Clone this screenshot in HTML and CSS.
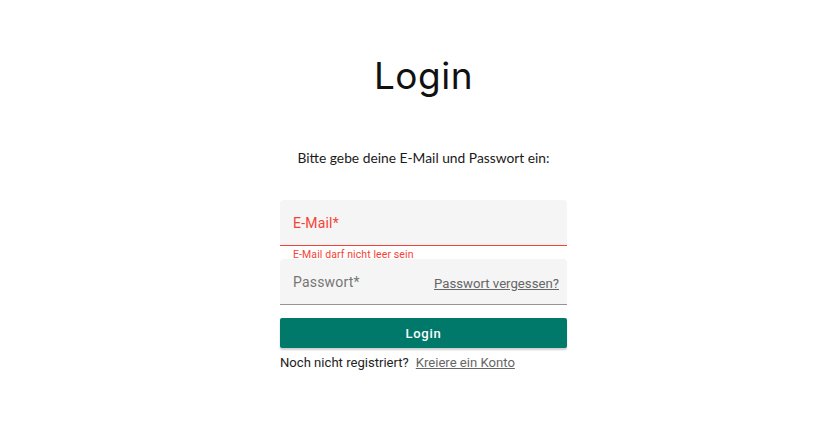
FILE: index.html
```html
<!DOCTYPE html>
<html lang="de">
<head>
<meta charset="utf-8">
<link rel="stylesheet" href="styles.css">
<title>Login</title>
</head>
<body>
<main class="page">
  <h1 class="title">Login</h1>
  <p class="intro">Bitte gebe deine E-Mail und Passwort ein:</p>
  <form class="form">
    <div class="field field-error">
      <span class="label">E-Mail*</span>
    </div>
    <div class="hint">E-Mail darf nicht leer sein</div>
    <div class="field">
      <span class="label">Passwort*</span>
      <a class="forgot" href="#">Passwort vergessen?</a>
    </div>
    <button class="btn" type="button">Login</button>
    <div class="register">
      <span>Noch nicht registriert?</span>
      <a href="#" class="reg-link">Kreiere ein Konto</a>
    </div>
  </form>
</main>
</body>
</html>
```

FILE: styles.css
```css
html, body {
  margin: 0;
  padding: 0;
  background: #fff;
}
body {
  font-family: Roboto, "Liberation Sans", sans-serif;
  color: #1a1a1a;
}
.page {
  display: flex;
  flex-direction: column;
  align-items: center;
  padding-left: 13px;
  padding-top: 52px;
}
.title {
  margin: 0;
  font-family: Inter, Lato, sans-serif;
  font-weight: 400;
  font-size: 37px;
  line-height: 48px;
  letter-spacing: 0.5px;
  color: #111;
}
.intro {
  margin: 48px 0 0;
  font-family: Lato, Inter, sans-serif;
  font-size: 13.8px;
  line-height: 20px;
  color: #1a1a1a;
}
.form {
  width: 287px;
  margin-top: 32px;
  display: flex;
  flex-direction: column;
}
.field {
  height: 45px;
  background: #f5f5f5;
  border-radius: 4px 4px 0 0;
  border-bottom: 1px solid #949494;
  display: flex;
  align-items: center;
  justify-content: space-between;
  padding: 0 8px 0 13px;
  box-sizing: content-box;
}
.field-error {
  border-bottom-color: #f44336;
}
.label {
  font-size: 14px;
  color: #757575;
  letter-spacing: 0.2px;
  margin-top: 1px;
}
.field-error .label {
  color: #f44336;
}
.hint {
  height: 11px;
  padding: 2px 0 0 13px;
  font-size: 10.5px;
  line-height: 13px;
  color: #f44336;
  letter-spacing: 0.1px;
}
.forgot {
  font-size: 13.2px;
  color: #666;
  text-decoration: underline;
  margin-top: 4px;
}
.btn {
  margin-top: 13px;
  height: 30px;
  border: 0;
  border-radius: 2px;
  background: #00796b;
  color: #fff;
  font-family: Roboto, "Liberation Sans", sans-serif;
  font-weight: 500;
  font-size: 13px;
  letter-spacing: 0.7px;
  box-shadow: 0 2px 2px rgba(0,0,0,0.2);
}
.register {
  margin-top: 6px;
  display: flex;
  gap: 7px;
  font-size: 13.1px;
  line-height: 18px;
  color: #222;
}
.reg-link {
  color: #666;
  text-decoration: underline;
}
```
